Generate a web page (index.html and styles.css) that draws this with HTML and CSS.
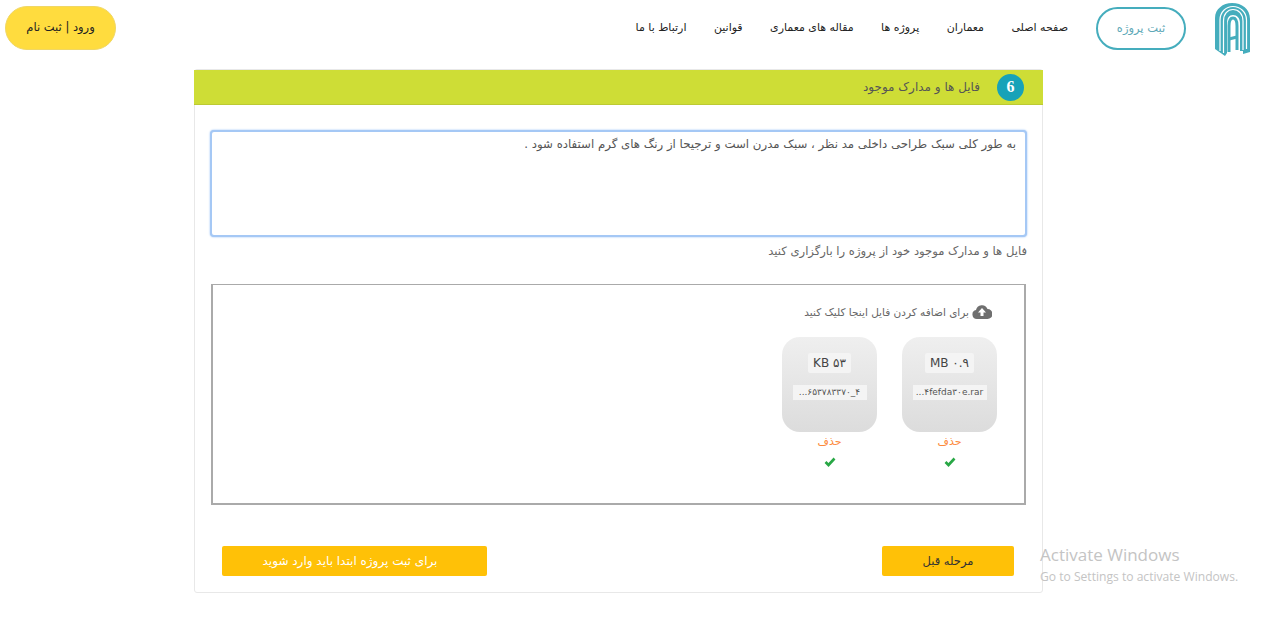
FILE: index.html
```html
<!DOCTYPE html>
<html lang="fa" dir="rtl">
<head>
<meta charset="utf-8">
<title>ثبت پروژه</title>
<link rel="stylesheet" href="styles.css">
</head>
<body>
<header class="topbar">
  <svg class="logo" viewBox="0 0 35 54" width="35" height="54" fill="none">
    <path fill="#45adbd" d="M0 16C0 7 8 1 17 1c10 0 18 6 18 16v33l-7 2v-3h-3V21c0-5-3-8-7-8s-6 3-6 8v30l-2 3-10-7z"/>
    <path stroke="#fff" stroke-width="1.200" d="M5 49V18C5 10 11 4.500 18 4.500S31.500 10 31.500 18v29M8.500 51V19c0-7 4-11.500 9.500-11.500S28 12 28 19v29"/>
    <path stroke="#45adbd" stroke-width="3" d="M14 50V24c0-5 1.500-8 4-8s4 3 4 8v24"/>
    <path stroke="#45adbd" stroke-width="3" d="M14 37l8-2"/>
  </svg>
  <a class="register" href="#">ثبت پروژه</a>
  <nav class="menu">
    <a href="#">صفحه اصلی</a>
    <a href="#">معماران</a>
    <a href="#">پروژه ها</a>
    <a href="#">مقاله های معماری</a>
    <a href="#">قوانین</a>
    <a href="#">ارتباط با ما</a>
  </nav>
  <a class="login" href="#">ورود | ثبت نام</a>
</header>

<main class="card">
  <div class="card-head">
    <span class="step">6</span>
    <span class="card-title">فایل ها و مدارک موجود</span>
  </div>
  <div class="card-body">
    <textarea class="notes">به طور کلی سبک طراحی داخلی مد نظر ، سبک مدرن است و ترجیحا از رنگ های گرم استفاده شود .</textarea>
    <p class="hint">فایل ها و مدارک موجود خود از پروژه را بارگزاری کنید</p>
    <section class="drop">
      <div class="drop-msg">
        <svg viewBox="0 0 20 16" width="20" height="16"><path fill="#6f6f6f" d="M5 15a4.500 4.500 0 0 1-1-8.900A6 6 0 0 1 15.500 5 5 5 0 0 1 15.500 15z"/><path fill="#fff" d="M10 4l4 4.500h-2.500V12h-3V8.500H6z"/></svg>
        <span>برای اضافه کردن فایل اینجا کلیک کنید</span>
      </div>
      <div class="files">
        <div class="file">
          <div class="thumb">
            <span class="size">MB ۰.۹</span>
            <span class="name">...۴fefda۳۰e.rar</span>
          </div>
          <a class="del" href="#">حذف</a>
          <svg class="ok" viewBox="0 0 12 10" width="12" height="10"><path fill="none" stroke="#28a745" stroke-width="2.600" d="M1.500 5l3 3 6-6.500"/></svg>
        </div>
        <div class="file">
          <div class="thumb">
            <span class="size">KB ۵۳</span>
            <span class="name">...۶۵۳۷۸۳۳۷۰_۴</span>
          </div>
          <a class="del" href="#">حذف</a>
          <svg class="ok" viewBox="0 0 12 10" width="12" height="10"><path fill="none" stroke="#28a745" stroke-width="2.600" d="M1.500 5l3 3 6-6.500"/></svg>
        </div>
      </div>
    </section>
    <div class="actions">
      <button class="btn prev" type="button">مرحله قبل</button>
      <button class="btn next" type="button">برای ثبت پروژه ابتدا باید وارد شوید</button>
    </div>
  </div>
</main>

<aside class="activate" dir="ltr">
  <div class="a1">Activate Windows</div>
  <div class="a2">Go to Settings to activate Windows.</div>
</aside>
</body>
</html>
```

FILE: styles.css
```css
* { box-sizing: border-box; }
html, body { margin: 0; padding: 0; background: #fff; }
body {
  font-family: "DejaVu Sans", "Noto Sans", sans-serif;
  font-size: 11px;
  color: #333;
  height: 636px;
  overflow: hidden;
  position: relative;
}
a { text-decoration: none; color: inherit; }

.topbar {
  display: flex;
  align-items: center;
  height: 56px;
  padding: 0 30px 0 5px;
}
.logo { flex: none; margin-top: 2px; }
.register {
  width: 90px;
  height: 43px;
  margin-right: 29px;
  padding-bottom: 1px;
  border: 2.500px solid #45adbd;
  border-radius: 22px;
  display: flex;
  align-items: center;
  justify-content: center;
  color: #5fa9b8;
  font-size: 11.500px;
}
.menu {
  display: flex;
  gap: 27.400px;
  margin-right: 28px;
  margin-bottom: 2px;
  color: #222;
  font-size: 11px;
}
.login {
  margin-right: auto;
  width: 111px;
  height: 44px;
  padding-bottom: 3px;
  background: #ffdc3e;
  border: 1px solid #f0d765;
  border-radius: 22px;
  display: flex;
  align-items: center;
  justify-content: center;
  color: #222;
  font-size: 11.500px;
}

.card {
  width: 849px;
  height: 524px;
  margin: 13px 237px 0 0;
  border: 1px solid #e8e8e8;
  border-radius: 3px;
}
.card-head {
  height: 35px;
  margin: 0 -1px;
  background: #cedd36;
  border-bottom: 1px solid #bcca33;
  display: flex;
  align-items: center;
  gap: 17px;
  padding-right: 19px;
}
.step {
  width: 27px;
  height: 27px;
  border-radius: 50%;
  background: #17a2b8;
  color: #fff;
  font-family: "Liberation Serif", serif;
  font-weight: 700;
  font-size: 16px;
  display: flex;
  align-items: center;
  justify-content: center;
}
.card-title { color: #555; font-size: 12px; }
.card-body { padding: 25px 15px 0; }
.notes {
  display: block;
  width: 817px;
  height: 107px;
  padding: 5px 9px 5px 5px;
  border: 2px solid #a5c8f5;
  border-radius: 4px;
  box-shadow: 0 0 2px #8fbbf5;
  outline: 0;
  resize: none;
  font: 11.750px "DejaVu Sans", sans-serif;
  color: #555;
}
.hint {
  margin: 6px 0 0;
  color: #666;
  font-size: 11.600px;
  line-height: 16px;
}
.drop {
  width: 815px;
  height: 221px;
  margin: 25px 1px 0 0;
  border: 2px solid #aaa;
  border-top-width: 1px;
  padding: 18px 32px 0 33px;
  color: #666;
}
.drop-msg {
  display: flex;
  align-items: center;
  gap: 3px;
  font-size: 10.500px;
  height: 18px;
}
.files { display: flex; gap: 25px; margin-top: 16px; margin-right: -5px; }
.file { width: 95px; display: flex; flex-direction: column; align-items: center; }
.thumb {
  width: 95px;
  height: 95px;
  border-radius: 18px;
  background: linear-gradient(#efefef, #dcdcdc);
  display: flex;
  flex-direction: column;
  align-items: center;
  padding-top: 16px;
  gap: 12px;
}
.size {
  background: #f4f4f4;
  padding: 2px 5px;
  border-radius: 2px;
  font-size: 12px;
  line-height: 16px;
  color: #444;
  direction: ltr;
}
.name {
  background: #f4f4f4;
  width: 74px;
  font-size: 9px;
  line-height: 15px;
  text-align: center;
  color: #555;
  direction: ltr;
  white-space: nowrap;
  overflow: hidden;
}
.del { margin-top: 1px; color: #fd8a3c; font-size: 11px; line-height: 17px; }
.ok { margin-top: 7px; }

.actions {
  display: flex;
  justify-content: space-between;
  margin: 41px 13px 0 12px;
}
.btn {
  height: 30px;
  border: 0;
  border-radius: 2px;
  background: #ffc107;
  font: 11.500px "DejaVu Sans", sans-serif;
}
.prev { width: 132px; color: #333; }
.next { width: 265px; padding-right: 15px; color: #fff; font-size: 12px; }

.activate {
  position: absolute;
  left: 1040px;
  top: 544px;
  color: #c4c4c4;
  font-family: "Open Sans", sans-serif;
}
.a1 { font-size: 17px; line-height: 22px; }
.a2 { font-size: 12.100px; line-height: 21px; }
```
